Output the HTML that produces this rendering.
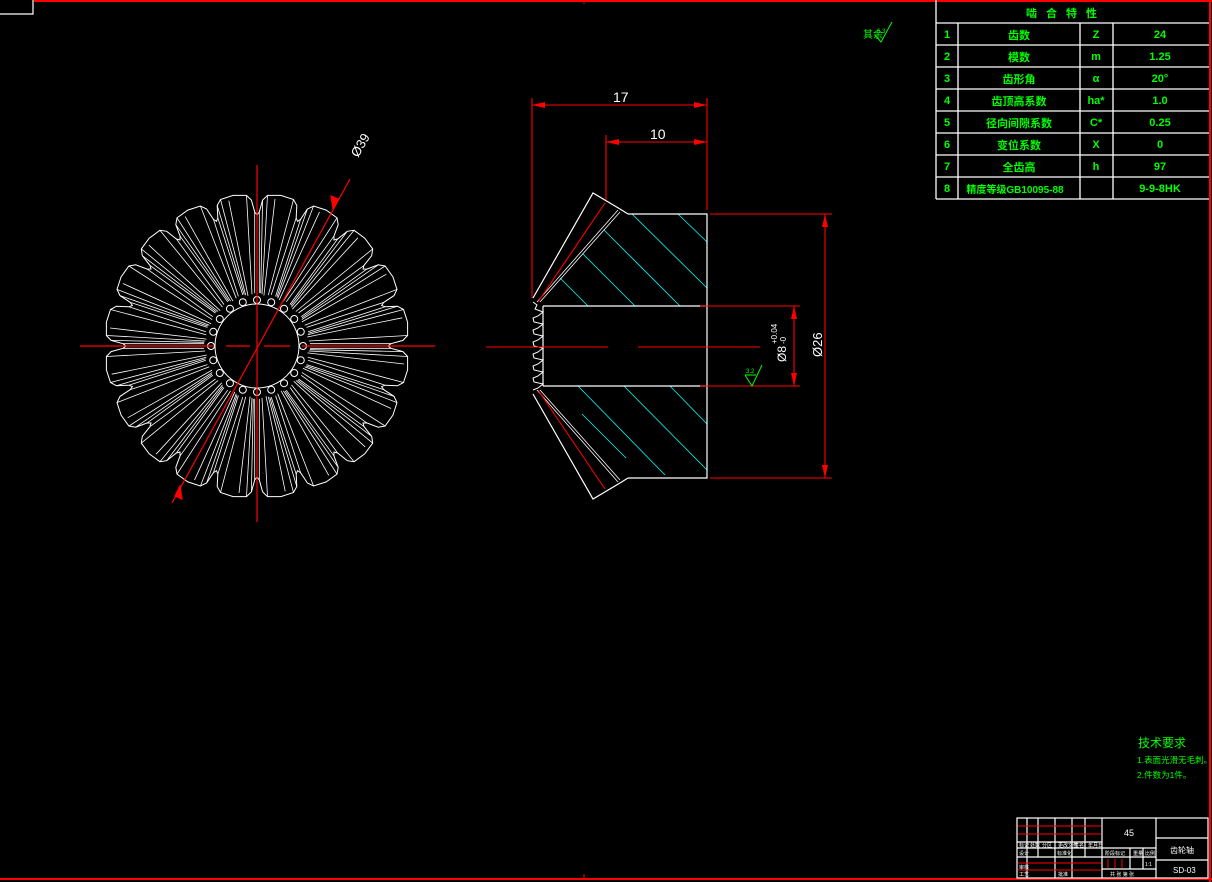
<!DOCTYPE html>
<html><head><meta charset="utf-8"><style>
html,body{margin:0;padding:0;background:#000;width:1212px;height:882px;overflow:hidden}
svg{display:block}
text{font-family:"Liberation Sans","Noto Sans CJK SC",sans-serif}
</style></head><body>
<svg id="s" width="1212" height="882" viewBox="0 0 1212 882" xmlns="http://www.w3.org/2000/svg">
<rect width="1212" height="882" fill="#000"/>
<line x1="34" y1="1" x2="1212" y2="1" stroke="#f00" stroke-width="2"/>
<line x1="0" y1="879" x2="1212" y2="879" stroke="#f00" stroke-width="2"/>
<line x1="1210" y1="0" x2="1210" y2="882" stroke="#f00" stroke-width="2"/>
<polyline points="0,14 33,14 33,0" fill="none" stroke="#fff" stroke-width="1.2"/>
<line x1="584" y1="0" x2="584" y2="4" stroke="#f00"/>
<line x1="584" y1="874" x2="584" y2="879" stroke="#f00"/>

<g id="gear" fill="none" stroke="#fff" stroke-width="1"></g>
<g stroke="#f00" stroke-width="1.2" fill="none">
<line x1="80" y1="346" x2="214" y2="346"/>
<line x1="226" y1="346" x2="250" y2="346" />
<line x1="264" y1="346" x2="290" y2="346"/>
<line x1="302" y1="346" x2="435" y2="346"/>
<line x1="257" y1="165" x2="257" y2="522"/>
<line x1="172" y1="503" x2="350" y2="179"/>
<polygon points="333,209 331,196 338,199" fill="#f00"/>
<polygon points="180,486 182,499 175,496" fill="#f00"/>
</g>
<text x="0" y="0" fill="#fff" font-size="13" transform="translate(358,158) rotate(-60)">Ø39</text>

<g stroke="#0ff" stroke-width="0.8">
<line x1="678" y1="214" x2="707" y2="242"/>
<line x1="632" y1="214" x2="707" y2="288"/>
<line x1="604" y1="230" x2="680" y2="306"/>
<line x1="583" y1="254" x2="635" y2="306"/>
<line x1="560" y1="278" x2="588" y2="306"/>
<line x1="578" y1="386" x2="665" y2="475"/>
<line x1="624" y1="386" x2="707" y2="470"/>
<line x1="670" y1="386" x2="707" y2="424"/>
<line x1="582" y1="414" x2="626" y2="458"/>
</g>
<g stroke="#fff" stroke-width="1.2" fill="none">
<polyline points="628,214 707,214 707,478 628,478"/>
<line x1="543" y1="306" x2="707" y2="306"/>
<line x1="543" y1="386" x2="707" y2="386"/>
<line x1="543" y1="306" x2="543" y2="386"/>
<polyline points="533,298 593,193 620,209 628,214"/>
<polyline points="537,302 618,210" stroke-width="0.8"/>
<polyline points="540,302 620,212" stroke-width="0.8"/>
<polyline points="533,394 593,499 620,483 628,478"/>
<polyline points="537,390 618,482" stroke-width="0.8"/>
<polyline points="540,390 620,480" stroke-width="0.8"/>
<polyline stroke-width="1" points="533,302 537,305 535,309 543,312 538,316 533,318 534,322 543,324 538,328 533,330 534,334 543,336 538,340 533,342 534,346 543,348 538,352 533,354 534,358 543,360 538,364 533,366 534,370 543,372 538,376 533,378 534,382 543,384 538,388 533,390"/>
</g>
<g stroke="#f00" stroke-width="1.1" fill="none">
<line x1="538" y1="302" x2="605" y2="203"/>
<line x1="538" y1="390" x2="605" y2="489"/>
<line x1="486" y1="347" x2="608" y2="347"/>
<line x1="638" y1="347" x2="760" y2="347"/>
<line x1="532" y1="98" x2="532" y2="298"/>
<line x1="707" y1="98" x2="707" y2="210"/>
<line x1="606" y1="135" x2="606" y2="200"/>
<line x1="532" y1="105" x2="707" y2="105"/>
<line x1="606" y1="142" x2="707" y2="142"/>
<line x1="710" y1="214" x2="832" y2="214"/>
<line x1="710" y1="478" x2="832" y2="478"/>
<line x1="825" y1="214" x2="825" y2="478"/>
<line x1="700" y1="306" x2="800" y2="306"/>
<line x1="700" y1="386" x2="800" y2="386"/>
<line x1="794" y1="306" x2="794" y2="386"/>
</g>
<g fill="#f00">
<polygon points="532,105 545,102 545,108"/><polygon points="707,105 694,102 694,108"/>
<polygon points="606,142 619,139 619,145"/><polygon points="707,142 694,139 694,145"/>
<polygon points="825,214 822,227 828,227"/><polygon points="825,478 822,465 828,465"/>
<polygon points="794,306 791,319 797,319"/><polygon points="794,386 791,373 797,373"/>
</g>
<text x="613" y="102" fill="#fff" font-size="14">17</text>
<text x="650" y="139" fill="#fff" font-size="14">10</text>
<text fill="#fff" font-size="13" transform="translate(822,357) rotate(-90)">Ø26</text>
<text fill="#fff" font-size="12" transform="translate(786,362) rotate(-90)">Ø8</text>
<text fill="#fff" font-size="8" transform="translate(777,344) rotate(-90)">+0.04</text>
<text fill="#fff" font-size="8" transform="translate(786,344) rotate(-90)">-0</text>
<g stroke="#0f0" fill="none"><polyline points="745,375 752,386 762,365"/><line x1="745" y1="375" x2="756" y2="375"/></g>
<text x="746" y="373" fill="#0f0" font-size="6">3.2</text>
<text x="863" y="38" fill="#0f0" font-size="10">其余</text>
<text x="877" y="33" fill="#0f0" font-size="6">6.3</text>
<g stroke="#0f0" fill="none"><polyline points="875,35 881,42 892,22"/></g>

<g stroke="#fff" stroke-width="1.3" fill="none">
<line x1="936" y1="0" x2="936" y2="199"/>
<line x1="936" y1="199" x2="1209" y2="199"/>
<line x1="958" y1="23" x2="958" y2="199"/>
<line x1="1080" y1="23" x2="1080" y2="199"/>
<line x1="1113" y1="23" x2="1113" y2="199"/>
<line x1="936" y1="23" x2="1209" y2="23"/>
<line x1="936" y1="45" x2="1209" y2="45"/>
<line x1="936" y1="67" x2="1209" y2="67"/>
<line x1="936" y1="89" x2="1209" y2="89"/>
<line x1="936" y1="111" x2="1209" y2="111"/>
<line x1="936" y1="133" x2="1209" y2="133"/>
<line x1="936" y1="155" x2="1209" y2="155"/>
<line x1="936" y1="177" x2="1209" y2="177"/>
</g>
<g fill="#0f0" font-size="11" text-anchor="middle" font-weight="bold">
<text x="1066" y="17" letter-spacing="9">啮合特性</text>
<text x="947" y="38">1</text><text x="1019" y="39">齿数</text><text x="1096" y="38">Z</text><text x="1160" y="38">24</text>
<text x="947" y="60">2</text><text x="1019" y="61">模数</text><text x="1096" y="60">m</text><text x="1160" y="60">1.25</text>
<text x="947" y="82">3</text><text x="1019" y="83">齿形角</text><text x="1096" y="82">α</text><text x="1160" y="82">20°</text>
<text x="947" y="104">4</text><text x="1019" y="105">齿顶高系数</text><text x="1096" y="104">ha*</text><text x="1160" y="104">1.0</text>
<text x="947" y="126">5</text><text x="1019" y="127">径向间隙系数</text><text x="1096" y="126">C*</text><text x="1160" y="126">0.25</text>
<text x="947" y="148">6</text><text x="1019" y="149">变位系数</text><text x="1096" y="148">X</text><text x="1160" y="148">0</text>
<text x="947" y="170">7</text><text x="1019" y="171">全齿高</text><text x="1096" y="170">h</text><text x="1160" y="170">97</text>
<text x="947" y="192">8</text><text x="1015" y="193" font-size="10">精度等级GB10095-88</text><text x="1160" y="192">9-9-8HK</text>
</g>

<g fill="#0f0">
<text x="1138" y="747" font-size="12">技术要求</text>
<text x="1137" y="763" font-size="8.5">1.表面光滑无毛刺。</text>
<text x="1137" y="778" font-size="8.5">2.件数为1件。</text>
</g>

<g stroke="#fff" stroke-width="1.2" fill="none">
<rect x="1017" y="818" width="191" height="60"/>
<line x1="1102" y1="818" x2="1102" y2="878"/>
<line x1="1156" y1="818" x2="1156" y2="878"/>
<line x1="1156" y1="838" x2="1208" y2="838"/>
<line x1="1156" y1="860" x2="1208" y2="860"/>
<line x1="1102" y1="848" x2="1156" y2="848"/>
<line x1="1102" y1="857" x2="1156" y2="857"/>
<line x1="1102" y1="869" x2="1156" y2="869"/>
<line x1="1130" y1="848" x2="1130" y2="869"/>
<line x1="1143" y1="848" x2="1143" y2="869"/>
<line x1="1017" y1="842" x2="1102" y2="842"/>
<line x1="1017" y1="848" x2="1102" y2="848"/>
<line x1="1017" y1="857" x2="1102" y2="857"/>
<line x1="1027" y1="818" x2="1027" y2="878"/>
<line x1="1038" y1="818" x2="1038" y2="857"/>
<line x1="1055" y1="818" x2="1055" y2="878"/>
<line x1="1072" y1="818" x2="1072" y2="878"/>
<line x1="1085" y1="818" x2="1085" y2="857"/>
</g>
<g stroke="#f00" stroke-width="1">
<line x1="1018" y1="826" x2="1101" y2="826"/>
<line x1="1018" y1="834" x2="1101" y2="834"/>
<line x1="1018" y1="863" x2="1101" y2="863"/>
<line x1="1018" y1="870" x2="1101" y2="870"/>
<line x1="1108" y1="859" x2="1108" y2="868"/>
<line x1="1115" y1="859" x2="1115" y2="868"/>
<line x1="1122" y1="859" x2="1122" y2="868"/>
</g>
<g fill="#fff" font-size="5">
<text x="1019" y="847">标记</text><text x="1030" y="847">处数</text><text x="1042" y="847">分区</text><text x="1058" y="847">更改文件</text><text x="1074" y="847">签名</text><text x="1088" y="847">年月日</text>
<text x="1019" y="855">设计</text><text x="1057" y="855">标准化</text>
<text x="1019" y="869">审核</text><text x="1019" y="876">工艺</text><text x="1058" y="876">批准</text>
<text x="1105" y="855">阶段标记</text><text x="1133" y="855">重量</text><text x="1145" y="855">比例</text>
<text x="1145" y="866">1:1</text>
<text x="1110" y="876">共  张  第  张</text>
</g>
<text x="1124" y="836" fill="#fff" font-size="9">45</text>
<text x="1170" y="853" fill="#fff" font-size="8">齿轮轴</text>
<text x="1173" y="873" fill="#fff" font-size="8">SD-03</text>
</svg>
<script>
(function(){
var g=document.getElementById('gear'),cx=257,cy=346,d='',NS='http://www.w3.org/2000/svg';
function P(r,a){a=(a-90)*Math.PI/180;return [cx+r*Math.cos(a),cy+r*Math.sin(a)];}
function f(p){return p[0].toFixed(1)+','+p[1].toFixed(1);}
var outline='';
for(var k=0;k<20;k++){
 var t=9+18*k;
 var pts=[P(131,t-9),P(134,t-8),P(146,t-6.8),P(151,t-5),P(152.5,t),P(151,t+5),P(146,t+6.8),P(134,t+8),P(131,t+9)];
 outline+=(k==0?'M':'L')+pts.map(f).join(' L');
 var L=[[151,t-5,52,t-3.5],[151,t+5,52,t+3.5],[134,t-8,53,t-6.5],[134,t+8,53,t+6.5],[148,t-2,51,t-1.2],[146,t-6.8,53,t-5]];
 L.forEach(function(l){d+='M'+f(P(l[0],l[1]))+'L'+f(P(l[2],l[3]));});
 var c=P(46,t+9);
 var e=document.createElementNS(NS,'circle');e.setAttribute('cx',c[0]);e.setAttribute('cy',c[1]);e.setAttribute('r',3.5);g.appendChild(e);
}
outline+='Z';
var p1=document.createElementNS(NS,'path');p1.setAttribute('d',outline);g.appendChild(p1);
var p2=document.createElementNS(NS,'path');p2.setAttribute('d',d);p2.setAttribute('stroke-width','0.8');g.appendChild(p2);
var b=document.createElementNS(NS,'circle');b.setAttribute('cx',cx);b.setAttribute('cy',cy);b.setAttribute('r',42);b.setAttribute('fill','#000');g.appendChild(b);
})();
</script>
</body></html>
